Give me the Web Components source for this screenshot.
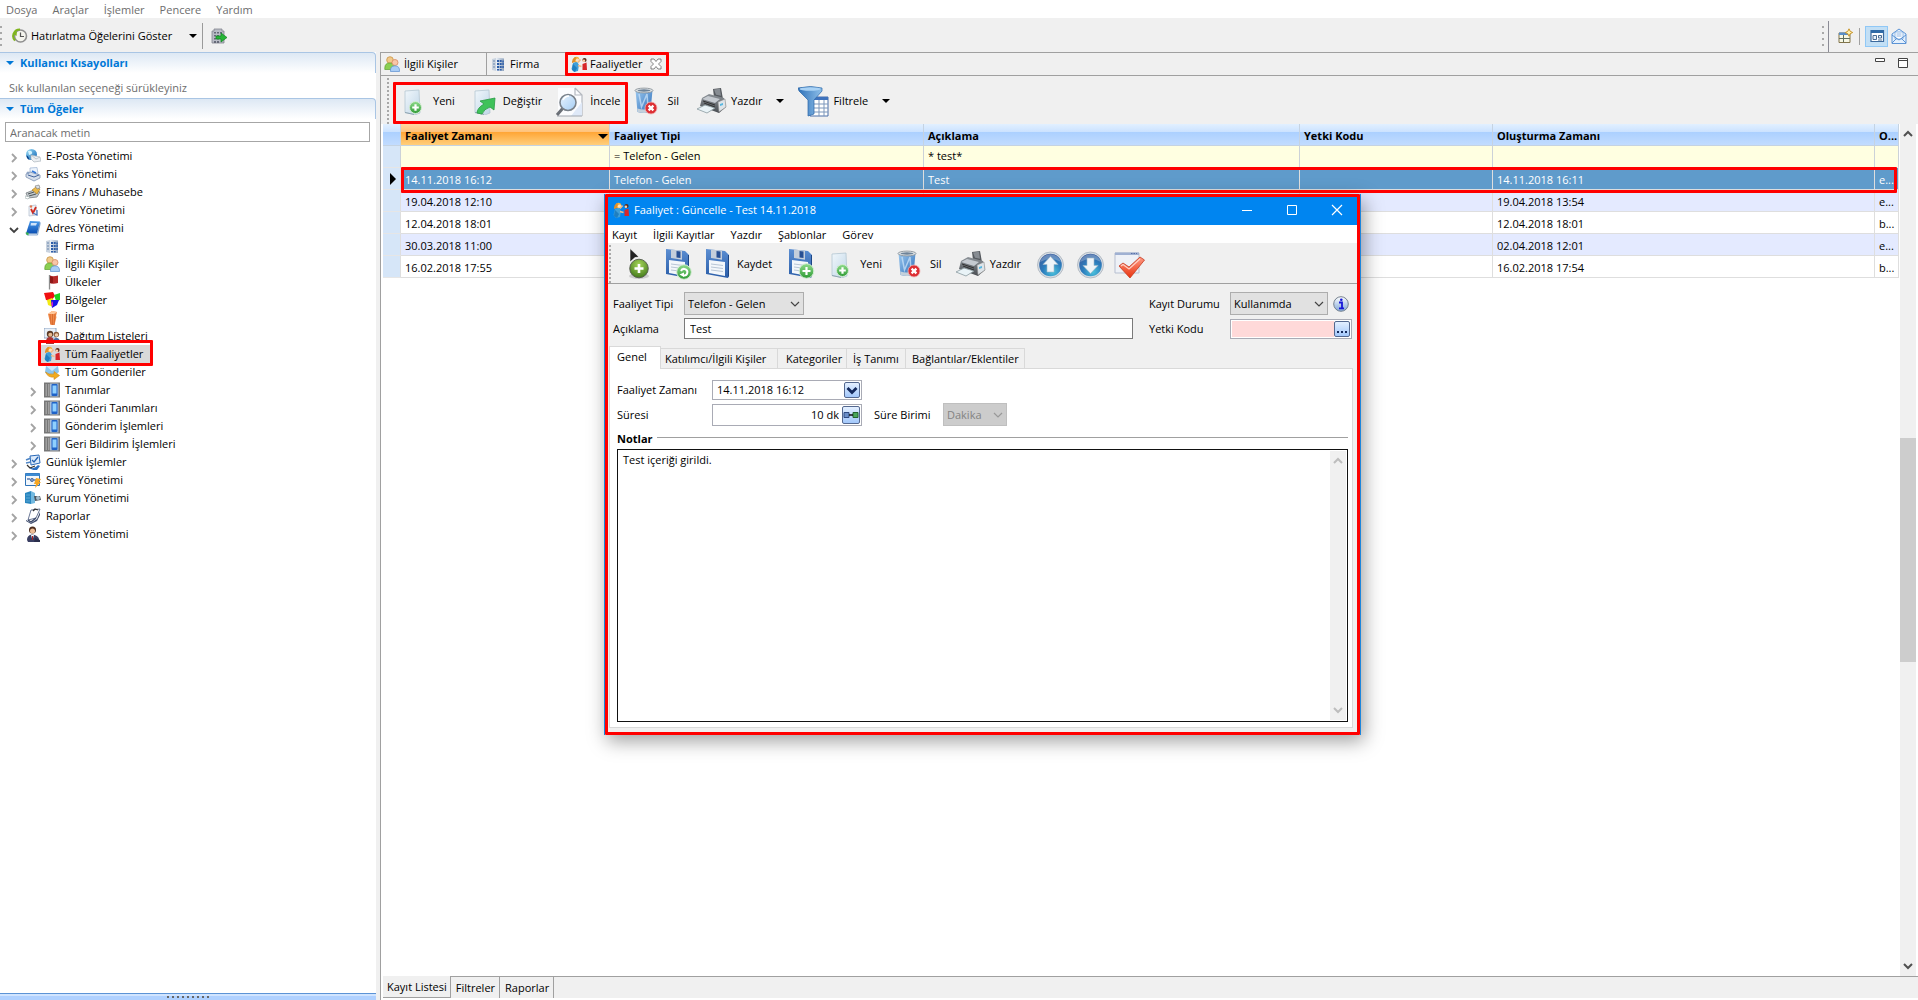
<!DOCTYPE html>
<html lang="tr">
<head>
<meta charset="utf-8">
<title>Faaliyetler</title>
<style>
html,body{margin:0;height:100%;overflow:hidden}
body{font:11px/16px "Open Sans","Noto Sans",sans-serif;color:#000;background:#f0f0f0}
</style>
</head>
<body>
<crm-app></crm-app>
<script>
const base = `*{box-sizing:border-box}button,input,select,textarea{font:inherit;color:inherit;margin:0;padding:0;border:0;background:none;border-radius:0;outline:0}button{display:flex;align-items:center;white-space:nowrap}label{white-space:nowrap}`;
const define = (name, html, setup) => {
  const tpl = document.createElement('template');
  tpl.innerHTML = html;
  customElements.define(name, class extends HTMLElement {
    constructor() {
      super();
      this.attachShadow({mode: 'open'}).append(tpl.content.cloneNode(true));
    }
    connectedCallback() { if (setup && !this.ready) { this.ready = true; setup(this, this.shadowRoot); } }
  });
};

/* ---------- icons ---------- */
const grad = (id, a, b, x2 = 0, y2 = 1) => `<linearGradient id="${id}" x1="0" y1="0" x2="${x2}" y2="${y2}"><stop offset="0" stop-color="${a}"/><stop offset="1" stop-color="${b}"/></linearGradient>`;
const badgePlus = (x, y, r) => `${grad('gp', '#8fdc8c', '#2f9a35')}<circle cx="${x}" cy="${y}" r="${r}" fill="url(#gp)" stroke="#d5ecd4" stroke-width="1"/><path d="M${x - r * .55} ${y}h${r * 1.1}M${x} ${y - r * .55}v${r * 1.1}" stroke="#fff" stroke-width="2.2"/>`;
const sheet = `${grad('sh', '#f1f7fb', '#bfd6e8', 1, 1)}<path d="M7 6l14-1 1 23-4 1.500-11-2z" fill="url(#sh)" stroke="#b4c6d2" stroke-width=".8"/><path d="M7 27.500l9 2" stroke="#8fa5b3"/>`;
const floppy = `${grad('fl', '#5b8ed2', '#2a5da8')}<path d="M4 1l19 2 4 4v21l-1 2L4 26z" fill="url(#fl)"/><path d="M26 7v22l1-1V7z" fill="#1c4686"/><path d="M9 1.500l11 1.200v9L9 10z" fill="#c4cedb"/><path d="M14.500 3l4 .4v6.500l-4-.4z" fill="#274f93"/><path d="M7 12l16 2v14L7 25z" fill="#f3f7fb"/><path d="M9 16l12 1.500M9 19l12 1.500M9 22l12 1.500" stroke="#b8c6d6"/>`;
const roundBlue = `<radialGradient id="rb" cx=".6" cy=".8" r=".8"><stop offset="0" stop-color="#4cc3dc"/><stop offset=".55" stop-color="#2b7cbd"/><stop offset="1" stop-color="#3a5f9f"/></radialGradient><circle cx="16.500" cy="17" r="13" fill="#d7dde3" stroke="#a9b3bc" stroke-width=".8"/><circle cx="16.500" cy="17" r="11.300" fill="url(#rb)"/><path d="M6 14a11 11 0 0 1 21 0q-10-6-21 0z" fill="#fff" opacity=".25"/>`;
const server = `<path d="M0 .5h16v15H0z" fill="#777"/><path d="M1.500 2H3v12H1.500zM4 2h1.500v12H4z" fill="#a0a0a0"/><path d="M6 1.500h8.500v13H6z" fill="#a9bfdb"/><rect x="7.500" y="2" width="6" height="12" rx="1" fill="#1f62c8"/><path d="M8.500 3.500h4v8h-4z" fill="#8fd0ff"/>`;
const building = `${grad('bl', '#eef3f9', '#8fa3bd', 1, 0)}<path d="M2 3l4-1v13l-4-1z" fill="#c9d3df"/><path d="M6 1.500l8 1V15H6z" fill="url(#bl)"/><path d="M3 5h2M3 8h2M3 11h2" stroke="#6b86ad"/><path d="M7 4h2v2H7zM9.700 4h2v2h-2zM12.300 4.500h1.500v2h-1.500zM7 7h2v2H7zM9.700 7h2v2h-2zM12.300 7h1.500v2h-1.500zM7 10h2v2H7zM9.700 10h2v2h-2zM12.300 10h1.500v2h-1.500zM7 13h2v1.500H7zM9.700 13h2v1.500h-2z" fill="#2e5ea8"/>`;
const activity = `<path d="M2 7l4-1.500 2 3.500-1 6-4 1L.5 13z" fill="#3f9fd8"/><path d="M2 8l4 4-2 4-3-2z" fill="#1f7fc0"/><circle cx="5.500" cy="3.500" r="2.800" fill="#f3b03c"/><path d="M1 5.500q1-4.500 4-4.500l-1 5-3 1z" fill="#e0902a"/><circle cx="6.500" cy="4.300" r="1.700" fill="#ffe1bd"/><path d="M7 6.500l2.500-3M7 9.500l3.500 1" stroke="#f0b987" stroke-width="1.700"/><circle cx="13.500" cy="4" r="2.100" fill="#5a2a1a"/><circle cx="12.900" cy="4.700" r="1.300" fill="#ffd2ac"/><path d="M11.500 8l4-1.500.5 7.500h-4.500z" fill="#d8262a"/>`;
const people = `<circle cx="6" cy="4" r="3.300" fill="#f1c98b" stroke="#c99443" stroke-width=".8"/><path d="M.8 12q0-5 5-5t5 5v1.500H.8z" fill="#8bcf52" stroke="#5d9f31" stroke-width=".7"/><circle cx="11" cy="6.500" r="3" fill="#f8c6a8" stroke="#d78a62" stroke-width=".8"/><path d="M6.500 15.500q-.6-5.500 4.500-5.700 5 .2 4.500 5.700z" fill="#a9cdf5" stroke="#5c8fd0" stroke-width=".7"/>`;
const bin = `${grad('bn', '#9cc9f0', '#2b6cb8', 1, 1)}<path d="M3.500 5h17l-2 22q-6 2-13 0z" fill="url(#bn)"/><path d="M7 9l2.500 13L15 9l1 13" fill="none" stroke="#cfe6fb" stroke-width="1.500" opacity=".7"/><path d="M5.300 23.500q6 2 13.400 0l-.3 3.500q-6 2-12.800 0z" fill="#c3d0db"/><ellipse cx="12" cy="5.500" rx="9" ry="2.400" fill="#dfe3e6" stroke="#8d969d" stroke-width=".9"/><ellipse cx="12" cy="5.500" rx="6.500" ry="1.200" fill="#6e8398"/><circle cx="19" cy="23" r="6" fill="#dd2f34" stroke="#f0b4b4" stroke-width=".8"/><path d="M16.600 20.600l4.800 4.800M21.400 20.600l-4.800 4.800" stroke="#fff" stroke-width="2.200"/>`;
const ICONS = {
  none: [0, ''],
  clock: [16, `<circle cx="8.500" cy="8" r="6" fill="#f4f4ee" stroke="#8f8f8f" stroke-width="1.600"/><path d="M8 1.500A6.500 6.500 0 0 0 3 12.500" fill="none" stroke="#7fb51c" stroke-width="2"/><path d="M.5 5.500L5 3.500 4.500 8z" fill="#7fb51c"/><path d="M8.500 4.500V8.500H12" fill="none" stroke="#555" stroke-width="1.200"/>`],
  export: [16, `<path d="M3 1h8v2h2v12H1V3h2z" fill="#b9bcc6" stroke="#80838e" stroke-width=".8"/><path d="M3 4h2v1.500H3zM6 4h2v1.500H6zM9 4h2v1.500H9zM3 7h2v1.500H3zM6 7h2v1.500H6zM3 10h2v1.500H3zM6 10h2v1.500H6zM3 13h2v2H3zM6 13h2v2H6z" fill="#666a78"/><path d="M5 8h5V5l6 4.500-6 4.500v-3H5z" fill="#27b537" stroke="#108420" stroke-width=".7"/>`],
  mail: [16, `${grad('m', '#9fe0f8', '#0c62b4', 1, 1)}<circle cx="6.500" cy="6.500" r="5.500" fill="url(#m)"/><path d="M3 3q3-1 4 1t-3 3z" fill="#d5f4ff"/><path d="M1.500 7q2 1 3 5-3-1-3-5z" fill="#063f86"/><path d="M6 7l9 2 1 4-7 1-3-3z" fill="#eceff2" stroke="#aeb6bd" stroke-width=".7"/><path d="M6 7l5 4 4-2" fill="none" stroke="#aeb6bd" stroke-width=".7"/>`],
  fax: [16, `<path d="M5 2l7-.5 1 6-8 1z" fill="#edf4fc" stroke="#9bb0cf" stroke-width=".7"/><path d="M1 8l4-2 10 3v3l-6 3-8-4z" fill="#d6dfec" stroke="#7b8fae" stroke-width=".8"/><path d="M3 9l6 2 5-2" fill="none" stroke="#41629a"/><path d="M7 5l4 2" stroke="#3478d8" stroke-width="1.600"/><circle cx="3" cy="7" r="1.500" fill="#8da3c4"/>`],
  finance: [16, `<path d="M1 9l8-3 6 2-3 5-9 1z" fill="#c2c8cc" stroke="#777e82" stroke-width=".8"/><path d="M7 6l4-3 4 2-3 5z" fill="#eab94a" stroke="#a7761a" stroke-width=".6"/><path d="M10 2l4-1 1 3-3 1z" fill="#d8dee2" stroke="#777" stroke-width=".6"/><path d="M3 10l6-2M4 12l7-2" stroke="#4d5558"/><path d="M0 12l5 1-2 2-3-1z" fill="#fff" stroke="#9aa" stroke-width=".6"/>`],
  task: [16, `<path d="M4 4l7-1 1 10-8 1z" fill="#eef2f7" stroke="#b9c4d3" stroke-width=".8"/><path d="M6 7l2 4 3-6" fill="none" stroke="#d22b20" stroke-width="1.800"/><path d="M8 11l4 2V8" fill="none" stroke="#4a74ba" stroke-width="1.200"/><circle cx="6" cy="4.500" r="1.200" fill="#e07a50"/>`],
  book: [16, `${grad('bk', '#4b9bea', '#0a4fb4')}<path d="M5 1l10 .5-3 12H1z" fill="url(#bk)"/><path d="M1 13.500h11l3-11v2L12.500 15H2z" fill="#e7edf5" stroke="#2b64ac" stroke-width=".5"/><path d="M6 3h6l-1 2.500H5.500z" fill="#cfe3fa"/><path d="M.5 12.500h3v3l-2-1z" fill="#37b34a"/>`],
  building: [16, building],
  people: [16, people],
  flag: [16, `<path d="M5.500 1v14.500" stroke="#8c8c8c" stroke-width="1.300"/><path d="M6 1.500q3 1.500 8 0v7.500q-5 1.500-8 0z" fill="#b52a2a"/><path d="M6 2q2 1.500 3 1v6q-2 .5-3 0z" fill="#8d1717"/>`],
  regions: [16, `<path d="M0 1l9-1 2 4-4 5-5-1z" fill="#f01010"/><path d="M10 3l6-2v7l-4 1z" fill="#1ed31e"/><path d="M3 8l5-2 4 5-3 4-5-2z" fill="#f2ea14"/><path d="M7 8l8 0-2 5-5 3z" fill="#1414e6"/><path d="M9 9l-2 3 2 3z" fill="#d21ad2"/>`],
  city: [16, `<path d="M4 4l4-3 5 1-1 4 .5 1-2 8H6.500z" fill="#f08a4a"/><path d="M6 4l1 10M8.500 4v11M11 4l-1 11" stroke="#d4652a" stroke-width=".8"/><path d="M4 4l4-3 5 1-3 2z" fill="#ffc79b"/>`],
  list: [16, `<path d="M0 0h12v10H0z" fill="#e9f0f8" stroke="#7a94b8" stroke-width=".8"/><circle cx="6" cy="6" r="3.200" fill="#5b3a26"/><circle cx="6.300" cy="6.800" r="2" fill="#e8b78f"/><path d="M2 14q0-5 4-5t4 5v2H2z" fill="#a33"/><circle cx="12.300" cy="6.500" r="2.800" fill="#8b5a3a"/><circle cx="12.500" cy="7" r="1.800" fill="#f0cba8"/><path d="M9 15q0-5 3.500-5t3.500 5z" fill="#46669e"/>`],
  activity: [16, activity],
  send: [16, `<path d="M2 2h12l1 6-4 3H4L1 8z" fill="#8cc6f0"/><path d="M2 2h12l-6 5z" fill="#cfe8fb"/><path d="M1.500 8q3 3 8.500 2V7.500l5.500 4L10 15.500V13q-6 1-8.500-5z" fill="#f2ac1e" stroke="#d08a18" stroke-width=".6"/>`],
  server: [16, server],
  daily: [16, `<path d="M5 2l9-1 1 8-9 2z" fill="#dceafa" stroke="#2a69b8"/><path d="M1 6l5-2M1 9l5-1" stroke="#4f86c6" stroke-width="1.600"/><path d="M7 6l2 2 4-5" fill="none" stroke="#2260b0" stroke-width="1.300"/><path d="M4 13q5 3 9-2l2 1-3 4q-5 1-8-3z" fill="#2d6fc0"/><path d="M2 11l3 3 5-2" fill="none" stroke="#333" stroke-width="1.200"/>`],
  process: [16, `<path d="M.5 1.500h14v12H.5z" fill="#f2f7fc" stroke="#2f73b7"/><path d="M.5 1.500h14V4H.5z" fill="#3d8bd2"/><path d="M2 7h3M7 6v4M9 8h3" stroke="#5577aa" stroke-width="1.500"/><circle cx="7" cy="8" r="1.600" fill="none" stroke="#5577aa"/><path d="M11 6l5 1-2 3h2l-6 6 1-4H9z" fill="#f6a623"/>`],
  company: [16, `<path d="M0 3l6-2v13l-6-1z" fill="#2a86bf"/><path d="M6 1l4 2v10l-4 1z" fill="#73b9e0"/><path d="M1 5h4M1 8h4M1 11h4" stroke="#5aa7d4"/><path d="M9 6l6 0 1 4-6 1z" fill="#4d565e"/><circle cx="13" cy="8" r="2" fill="#a4bccc"/>`],
  report: [16, `<path d="M6 2l9-1-4 9-8 2z" fill="#fff" stroke="#5b6a8a" stroke-width=".9"/><path d="M1 12l5 3 6-4 3-7v3l-3 6-6 3-5-3z" fill="#3d4a6b"/><path d="M3 12l3 2 5-4" fill="none" stroke="#3d4a6b" stroke-width="1.500"/><path d="M8 3l2-2 3 1" fill="none" stroke="#333" stroke-width="1.300"/>`],
  user: [16, `<circle cx="7.500" cy="4" r="3.500" fill="#4b2c1c"/><circle cx="7.500" cy="5" r="2.500" fill="#eebd95"/><path d="M2 14q0-5 5-5.500 6 .5 7 4.500v3H3z" fill="#3a3f63"/><path d="M6 9l1.500 5L9 9z" fill="#fff"/><path d="M7.500 10v4" stroke="#b02020"/><path d="M10 12l5 2v2h-6z" fill="#2a2e4c"/>`],
  persp: [16, `<path d="M2 5h11v9.500H2z" fill="#f7f7e4" stroke="#82754a"/><path d="M2 4.500h9V7H2z" fill="#5a8fc8"/><path d="M6.500 7v7M2 10.500h11" stroke="#5f6e5f"/><path d="M12 .8l1.200 2.500L15.700 4.500l-2.500 1.200L12 8.200l-1.200-2.500L8.300 4.500l2.500-1.200z" fill="#fff2b0" stroke="#c9962a"/>`],
  windowed: [16, `<path d="M2 2.500h12.500v11H2z" fill="#fff" stroke="#3c6a9d" stroke-width="1.200"/><path d="M2 2h12.500v3H2z" fill="#2f6aa6"/><path d="M4 7.500h3.500v4H4zM9.500 7.500h3v2.500h-3z" fill="#e7f1fb" stroke="#4a6c92"/><path d="M9 12h4" stroke="#4a6c92"/>`],
  open: [16, `<path d="M1 6l7-5 7 5v9.500H1z" fill="#e3f0fd" stroke="#5b93d5"/><path d="M4 4h8v7H4z" fill="#fff" stroke="#7aa8de" stroke-width=".8"/><path d="M5.500 6h5M5.500 8h5" stroke="#8db4e4"/><path d="M1 7l7 5 7-5M1 15l5-5M15 15l-5-5" fill="none" stroke="#5b93d5"/>`],
  info: [16, `${grad('in', '#fff', '#7fa6d8')}<circle cx="8" cy="8" r="7.300" fill="url(#in)" stroke="#76828f"/><path d="M6 6.500h3V12M6 12.300h5" stroke="#1717d8" stroke-width="1.800" fill="none"/><circle cx="8.300" cy="3.800" r="1.300" fill="#1717d8"/>`],
  new: [32, sheet + badgePlus(17.5, 22.5, 6)],
  edit: [32, sheet + `<path d="M9 28q0-5 7-9l-4-3 15-3-1 12-4-3q-6 2-8 7z" fill="#3fc25a" stroke="#2a9a44" stroke-width=".8"/>`],
  inspect: [32, `<path d="M3 3h17l7 7v21H3z" fill="#fbfcfe"/><path d="M20 3l7 7v21M20 3v7h7" fill="none" stroke="#b4b8bf" stroke-width="1.200"/><path d="M16 31h11V17z" fill="#dfe9f8"/><path d="M2 31h25" stroke="#a0a6ae"/>${grad('ln', '#e8f4ff', '#a5cdf4', 1, 1)}<path d="M8 23l-6 7" stroke="#6a6f76" stroke-width="3"/><circle cx="13" cy="17.500" r="8" fill="url(#ln)" stroke="#7a828b" stroke-width="1.600"/><path d="M8 15q2-4 6-4" fill="none" stroke="#fff" stroke-width="1.600"/>`],
  bin: [32, bin],
  print: [32, `${grad('pr', '#8c9298', '#4a4e53')}<path d="M17 4l8-1 2 11-9-2z" fill="#55595e"/><path d="M18 4.500l6-.8 1 7-5-1z" fill="#878c92"/><path d="M6 13l7-4 15 4 2 9-7 6L4 21z" fill="url(#pr)"/><path d="M6 14l6-3 12 3-5 4z" fill="#c5cad0"/><path d="M22 17l7-3 1 8-7 5z" fill="#dfe4e8" stroke="#888" stroke-width=".6"/><path d="M24 19l3-1v2l-3 1z" fill="#58b7e0"/><path d="M1 24l8-4 10 3-8 5z" fill="#e9f3f7" stroke="#8a9aa0" stroke-width=".8"/><path d="M7 16l12 4M8 18l11 4" stroke="#333" stroke-width="1"/>`],
  filter: [32, `<path d="M12 12h18v19H12z" fill="#fff" stroke="#4a6fa8"/><path d="M12 12h18v3H12z" fill="#3f73bd"/><path d="M12 19h18M12 23h18M12 27h18M21 15v16M26 15v16" stroke="#7d97bb"/>${grad('fn', '#2e71b8', '#8fc0ea', 1, 0)}<path d="M0 3q13-3 24 0v3l-8 9v14l-6 2V15L1 6z" fill="url(#fn)" stroke="#2a66a8" stroke-width=".7"/><ellipse cx="12" cy="4" rx="10.500" ry="1.800" fill="#a9d2f5"/>`],
  add: [32, `<radialGradient id="ad" cx=".5" cy=".3" r=".8"><stop offset="0" stop-color="#a7d65a"/><stop offset="1" stop-color="#356d12"/></radialGradient><ellipse cx="17" cy="28" rx="10" ry="3" fill="#000" opacity=".15"/><circle cx="17" cy="20.500" r="9.300" fill="url(#ad)" stroke="#52594c" stroke-width=".9"/><path d="M12.500 20.500h9M17 16v9" stroke="#fff" stroke-width="2.600"/><path d="M8 .5l9 8.500-4 .6L8 14z" fill="#222" stroke="#fff" stroke-width=".6"/>`],
  save: [32, floppy],
  saveref: [32, floppy + `${grad('gr', '#8fdc8c', '#2f9a35')}<circle cx="22" cy="24" r="7.300" fill="url(#gr)" stroke="#d5ecd4"/><path d="M19 23a3.300 3.300 0 1 1 2.500 4.500" fill="none" stroke="#fff" stroke-width="2"/><path d="M17.500 26.500l4.500-2v4.500z" fill="#fff"/>`],
  saveadd: [32, floppy + badgePlus(21.5, 23, 7.3)],
  up: [32, roundBlue + `<path d="M16.500 8.500l7.500 8h-4V24h-7v-7.500H9z" fill="#eef4f8" stroke="#9fb6c8" stroke-width=".6"/>`],
  down: [32, roundBlue + `<path d="M16.500 25.500l7.500-8h-4V10h-7v7.500H9z" fill="#eef4f8" stroke="#9fb6c8" stroke-width=".6"/>`],
  check: [32, `${grad('ck', '#ff9a84', '#e8330f')}<path d="M1 5h24v20H1z" fill="#eef1f7" stroke="#b7bfd0"/><path d="M1 4.500h24V7H1z" fill="#9fb0d2"/><path d="M17 5.500h6" stroke="#5670a8" stroke-dasharray="1.500 1"/><path d="M5 18l4-3 6 4L26 9l4.500 3L16 30z" fill="url(#ck)" stroke="#c43a20" stroke-width=".8"/><path d="M7 18l2-1.500 6 4.500L26 11" fill="none" stroke="#ffd0c5" stroke-width="1.200"/>`],
  right: [10, `<path d="M3 1l4 4-4 4" fill="none" stroke="#a3a3a3" stroke-width="1.800"/>`],
  expanded: [10, `<path d="M1 3l4 4 4-4" fill="none" stroke="#404040" stroke-width="1.800"/>`],
  chev: [10, `<path d="M1 3l4 4 4-4" fill="none" stroke="currentColor" stroke-width="1.200"/>`],
  sup: [10, `<path d="M1 8l4-4 4 4" fill="none" stroke="currentColor" stroke-width="2"/>`],
  sdown: [10, `<path d="M1 2l4 4 4-4" fill="none" stroke="currentColor" stroke-width="2"/>`],
  tri: [8, `<path d="M0 2h8L4 6z" fill="currentColor"/>`],
  sort: [10, `<path d="M0 3h10L5 8z" fill="#000"/>`],
  close: [12, `<path d="M1 1h3l2 2.500L8 1h3v2.500L8.500 6 11 8.500V11H8L6 8.500 4 11H1V8.500L3.500 6 1 3.500z" fill="#fff" stroke="#666" stroke-width=".8"/>`],
  wmin: [12, `<path d="M1.500 1.500h9v3h-9z" fill="#fff" stroke="#444"/>`],
  wmax: [12, `<path d="M1.500 1.500h9v9h-9zM1.500 3.500h9" fill="#fff" stroke="#444"/>`],
  cmin: [12, `<path d="M1 6.500h10" stroke="#fff"/>`],
  cmax: [12, `<path d="M1.500 1.500h9v9h-9z" fill="none" stroke="#fff"/>`],
  cclose: [12, `<path d="M1 1l10 10M11 1L1 11" stroke="#fff" stroke-width="1.200"/>`],
  pick: [16, `<path d="M3.500 6l4.500 4.500L12.500 6" fill="none" stroke="#13295c" stroke-width="2.800"/>`],
  link: [16, `<path d="M1 5.500h5v5H1z" fill="#6b8fc8" stroke="#2f4a80"/><path d="M10 5.500h5v5h-5z" fill="#4aa75a" stroke="#23642f"/><path d="M6 8h4" stroke="#111" stroke-width="1.500"/>`],
  dots: [16, `<path d="M3 10h2v2H3zM7 10h2v2H7zM11 10h2v2h-2z" fill="#13295c"/>`]
};
const makeIcon = name => {
  const icon = document.createElement('ui-icon');
  icon.setAttribute('name', name);
  return icon;
};
define('ui-icon', `<style>:host{display:inline-flex;flex:none}svg{display:block}</style>`, (el, root) => {
  const [size, art] = ICONS[el.getAttribute('name')];
  const holder = document.createElement('template');
  holder.innerHTML = `<svg width="${size}" height="${size}" viewBox="0 0 ${size} ${size}" aria-hidden="true">${art}</svg>`;
  root.append(holder.content);
});

/* red frame that calls out the part it lies over */
define('call-out', `<style>:host{position:absolute;inset:var(--inset,0);border:3px solid #f00;border-radius:1px;pointer-events:none;z-index:2}</style>`);

define('grip-dots', `<style>:host{display:block;flex:none;width:2px;align-self:stretch;background:repeating-linear-gradient(#a8a8a8 0 2px,transparent 2px var(--step,4px))}</style>`);

define('tool-button', `<style>${base}:host{display:block;flex:none}button{gap:3px;padding-right:1px}:host([text]) button{padding-right:6px}:host([menu]) button{padding-right:3px}.arrow{display:none;margin-left:11px}:host([menu]) .arrow{display:block}:host(:not([text])) button{gap:0}</style>
<button><ui-icon name="none"></ui-icon><slot></slot><ui-icon name="tri" class="arrow"></ui-icon></button>`, (el, root) => {
  root.querySelector('ui-icon').replaceWith(makeIcon(el.getAttribute('icon')));
  root.querySelector('button').setAttribute('aria-label', el.textContent.trim() || el.getAttribute('label'));
});

define('menu-bar', `<style>${base}:host{display:flex;flex:none;height:18px;background:#fff;padding-left:var(--start,6px);gap:var(--gap,15px);color:var(--ink,#6d6d6d)}button{padding-top:2px}</style>`, (el, root) => {
  for (const text of el.getAttribute('items').split('|')) {
    const b = document.createElement('button');
    b.textContent = text;
    root.append(b);
  }
});

define('main-toolbar', `<style>${base}
:host{display:flex;flex:none;height:34px;align-items:center;background:#f0f0f0;padding-top:2px}
grip-dots{height:21px;align-self:center;--step:6px}
.remind{margin-left:10px;gap:3px}.remind ui-icon[name=tri]{margin-left:14px}
.sep{width:1px;height:26px;background:#9a9a9a;margin:0 8px 0 5px}
.right{margin-left:auto;display:flex;align-items:center;padding-right:11px}
.edge{width:1px;height:31px;background:#8c8c96;margin:0 8px 0 4px}
.sep2{width:1px;height:17px;background:#a0a0a0;margin:0 5px 0 6px}
.on{width:23px;height:21px;justify-content:center;background:#c2dff5;border:1px solid #90c8f6;margin-right:3px}
</style>
<grip-dots></grip-dots><button class="remind"><ui-icon name="clock"></ui-icon>Hatırlatma Öğelerini Göster<ui-icon name="tri"></ui-icon></button>
<span class="sep"></span><button aria-label="Çıkış"><ui-icon name="export"></ui-icon></button>
<div class="right"><grip-dots></grip-dots><span class="edge"></span><button aria-label="Perspektif aç"><ui-icon name="persp"></ui-icon></button><span class="sep2"></span><button class="on" aria-label="Kayıtlar"><ui-icon name="windowed"></ui-icon></button><button aria-label="Posta"><ui-icon name="open"></ui-icon></button></div>`);

define('section-head', `<style>${base}:host{display:flex;flex:none;height:21px;align-items:center;gap:6px;padding-left:6px;border:1px solid #a9c5e4;border-width:1px 1px 0 0;border-radius:0 4px 0 0;background:linear-gradient(#dde8f4,#fff);color:#0078d7;font-weight:700}h2{font:inherit;margin:0}</style><ui-icon name="tri"></ui-icon><h2><slot></slot></h2>`);

const TREE = [
  [0, 'mail', 'E-Posta Yönetimi', 1], [0, 'fax', 'Faks Yönetimi', 1], [0, 'finance', 'Finans / Muhasebe', 1], [0, 'task', 'Görev Yönetimi', 1], [0, 'book', 'Adres Yönetimi', 2],
  [1, 'building', 'Firma'], [1, 'people', 'İlgili Kişiler'], [1, 'flag', 'Ülkeler'], [1, 'regions', 'Bölgeler'], [1, 'city', 'İller'], [1, 'list', 'Dağıtım Listeleri'], [1, 'activity', 'Tüm Faaliyetler', 0, 1], [1, 'send', 'Tüm Gönderiler'],
  [1, 'server', 'Tanımlar', 1], [1, 'server', 'Gönderi Tanımları', 1], [1, 'server', 'Gönderim İşlemleri', 1], [1, 'server', 'Geri Bildirim İşlemleri', 1],
  [0, 'daily', 'Günlük İşlemler', 1], [0, 'process', 'Süreç Yönetimi', 1], [0, 'company', 'Kurum Yönetimi', 1], [0, 'report', 'Raporlar', 1], [0, 'user', 'Sistem Yönetimi', 1]];
define('nav-tree', `<style>${base}
:host{display:block;padding:5px 0 0 9px}ul{margin:0;padding:0;list-style:none}
li{display:flex;align-items:center;height:18px;gap:6px}li.child{padding-left:19px}
.tw{width:10px;height:10px;padding:0;margin-top:3px}
.item{position:relative;gap:5px;height:18px;white-space:nowrap}
.sel{isolation:isolate}.sel::before{content:"";position:absolute;inset:0 -8px 0 -3px;background:#d9d9d9;z-index:-1}
call-out{--inset:-5px -10px -3px -6px}
</style><ul role="tree"></ul>`, (el, root) => {
  root.querySelector('ul').innerHTML = TREE.map(([lvl, icon, text, tw, sel]) =>
    `<li role="treeitem" class="${lvl ? 'child' : ''}"><button class="tw" tabindex="-1" aria-label="${text} dalı">${tw ? `<ui-icon name="${tw === 2 ? 'expanded' : 'right'}"></ui-icon>` : ''}</button><button class="item ${sel ? 'sel' : ''}"><ui-icon name="${icon}"></ui-icon>${text}${sel ? '<call-out></call-out>' : ''}</button></li>`).join('');
});

define('side-panel', `<style>${base}
:host{display:flex;flex-direction:column;background:#fff;min-height:0}
p{margin:0;padding:7px 9px 2px;height:25px;color:#6d6d6d;white-space:nowrap}
.search{margin:3px 6px 0 5px;height:20px;border:1px solid #a6a6a6;padding:0 4px;background:#fff}
.search::placeholder{color:#6d6d6d;opacity:1}
nav-tree{flex:1;min-height:0}
.foot{height:7px;flex:none;border-top:1px solid #5b93d6;background:linear-gradient(#d0e4ff 0 2px,#b0d1ff 2px);display:flex;justify-content:center}
.foot i{margin-top:2px;width:43px;height:2px;background:repeating-linear-gradient(90deg,#666 0 2px,transparent 2px 5px)}
</style>
<section-head>Kullanıcı Kısayolları</section-head><p>Sık kullanılan seçeneği sürükleyiniz</p>
<section-head>Tüm Öğeler</section-head><input class="search" placeholder="Aranacak metin" aria-label="Aranacak metin">
<nav-tree></nav-tree><div class="foot"><i></i></div>`);

define('editor-tabs', `<style>${base}
:host{display:flex;flex:none;height:24px;border-top:1px solid #a0a0a0;border-bottom:1px solid #a0a0a0;background:#f0f0f0}
button{gap:4px;padding-left:3px;border-right:1px solid #a0a0a0;position:relative}
.a{width:106px}.b{width:78px;border-right:0}.c{width:104px;padding-left:6px;gap:3px;border:0}.c ui-icon[name=close]{margin-left:4px}
call-out{--inset:-1px 0 -1px 0}
div{margin-left:auto;display:flex;gap:11px;padding:4px 9px 0 0}div button{border:0;padding:0;align-items:flex-start}
</style>
<button class="a"><ui-icon name="people"></ui-icon>İlgili Kişiler</button><button class="b"><ui-icon name="building"></ui-icon>Firma</button><button class="c"><ui-icon name="activity"></ui-icon>Faaliyetler<ui-icon name="close"></ui-icon><call-out></call-out></button>
<div><button aria-label="Küçült"><ui-icon name="wmin"></ui-icon></button><button aria-label="Büyüt"><ui-icon name="wmax"></ui-icon></button></div>`);

define('record-toolbar', `<style>${base}
:host{display:flex;flex:none;height:48px;background:#f0f0f0;padding:2px 0 0 6px}
.bar,.marked{display:flex;align-items:center;gap:7px;height:46px}
.marked{position:relative;padding-left:9px;margin-right:6px}
call-out{--inset:4px -2px 0 4px}
.bar tool-button[menu]{margin-left:4px}
</style>
<grip-dots></grip-dots><div class="marked"><tool-button icon="new" text>Yeni</tool-button><tool-button icon="edit" text>Değiştir</tool-button><tool-button icon="inspect" text>İncele</tool-button><call-out></call-out></div>
<div class="bar"><tool-button icon="bin" text>Sil</tool-button><tool-button icon="print" text menu>Yazdır</tool-button><tool-button icon="filter" text menu>Filtrele</tool-button></div>`);

const ROWS = [['14.11.2018 16:12', 'Telefon - Gelen', 'Test', '', '14.11.2018 16:11', 'e...'], ['19.04.2018 12:10', '', '', '', '19.04.2018 13:54', 'e...'], ['12.04.2018 18:01', '', '', '', '12.04.2018 18:01', 'b...'], ['30.03.2018 11:00', '', '', '', '02.04.2018 12:01', 'e...'], ['16.02.2018 17:55', '', '', '', '16.02.2018 17:54', 'b...']];
define('record-grid', `<style>${base}
:host{display:flex;flex:1;min-height:0;background:#fff;padding-left:2px}
.wrap{flex:1;min-width:0;margin-right:1px}
.holder{position:relative}
table{width:100%;table-layout:fixed;border-collapse:separate;border-spacing:0}
th,td{height:22px;padding:2px 0 0 4px;text-align:left;white-space:nowrap;overflow:hidden;border:1px solid #dedede;border-width:0 1px 1px 0;line-height:16px}
th{background:linear-gradient(#e2f0ff,#cbe2ff 38%,#abd0ff 38%,#c2dcff);font-weight:700;border-color:#c5d3e2}
th.sort{background:linear-gradient(#ffd8a4,#ffc27a 38%,#ffa535 38%,#ffcf7c)}
th.sort div{display:flex;justify-content:space-between;align-items:center;padding-right:1px}
tbody tr:nth-child(even) td{background:#e4eaff}
tr.filter td{background:#ffffe1;border-bottom-color:#f0f0f0;padding:0 0 2px 4px;border-right-color:#ccd2d8}
tr td:first-child,tbody tr:nth-child(even) td:first-child,tr.filter td:first-child{background:#d6e6f8;padding:0;border-bottom-color:#e6e6e6}
tbody tr.sel td:not(:first-child){background:#5f9bcb;color:#fff}
call-out{--inset:43px 2px auto 18px;height:26px}
.ptr{display:block;width:0;height:0;border:6px solid transparent;border-left-color:#000;border-right:0;margin-left:7px}
.scroll{width:16px;flex:none;background:#f0f0f0;margin-right:2px;display:flex;flex-direction:column;align-items:center;padding:4px 0;color:#505050}
.track{flex:1;width:100%;display:flex;flex-direction:column}.track::before{content:"";flex:300}.track i{flex:223;background:#cdcdcd}.track::after{content:"";flex:300}
</style>
<div class="wrap"><div class="holder"><table><colgroup><col style="width:18px"><col style="width:209px"><col style="width:314px"><col><col style="width:193px"><col style="width:382px"><col style="width:24px"></colgroup>
<thead><tr><th aria-label="Seçim"></th><th class="sort"><div>Faaliyet Zamanı<ui-icon name="sort"></ui-icon></div></th><th>Faaliyet Tipi</th><th>Açıklama</th><th>Yetki Kodu</th><th>Oluşturma Zamanı</th><th>O...</th></tr>
<tr class="filter"><td></td><td></td><td>= Telefon - Gelen</td><td>* test*</td><td></td><td></td><td></td></tr></thead><tbody></tbody></table><call-out></call-out></div></div>
<div class="scroll"><ui-icon name="sup"></ui-icon><div class="track"><i></i></div><ui-icon name="sdown"></ui-icon></div>`, (el, root) => {
  root.querySelector('tbody').innerHTML = ROWS.map((r, i) => `<tr${i ? '' : ' class="sel"'}><td>${i ? '' : '<span class="ptr"></span>'}</td>${r.map(c => `<td>${c}</td>`).join('')}</tr>`).join('');
});

define('page-tabs', `<style>${base}
:host{display:flex;flex:none;height:24px;background:#fff;padding:0 0 2px 2px}
button{height:22px;padding:0 4px 0 5px;background:#f0f0f0;border:1px solid #a0a0a0;border-width:1px 1px 0 0}
.on{border-width:0 1px 1px 0;padding:0 3px 0 4px}
span{flex:1;background:#f0f0f0;border-top:1px solid #a0a0a0}
</style><button class="on">Kayıt Listesi</button><button>Filtreler</button><button>Raporlar</button><span></span>`);

define('drop-field', `<style>${base}
:host{display:inline-grid;height:23px}
select,ui-icon{grid-area:1/1}select{appearance:none;width:100%;height:23px;border:1px solid #adadad;background:#e1e1e1;padding:0 3px}
ui-icon{justify-self:end;align-self:center;margin-right:4px;color:#444;pointer-events:none}
select:disabled{background:#ccc;border-color:#bfbfbf;color:#838383;opacity:1}select:disabled+ui-icon{color:#999}
</style><select><option></option></select><ui-icon name="chev"></ui-icon>`, (el, root) => {
  const s = root.querySelector('select');
  s.options[0].textContent = el.getAttribute('value');
  s.disabled = el.hasAttribute('disabled');
  s.setAttribute('aria-label', el.getAttribute('label'));
});

define('pick-field', `<style>${base}
:host{display:flex;height:var(--h,20px);border:1px solid #a9abb5;background:#fff;padding:1px;align-items:stretch}
input{flex:1;min-width:0;padding:0 3px;background:var(--fill,#fff);text-align:var(--align,left)}
button{width:var(--b,16px);justify-content:center;border:1px solid #54688f;border-radius:2px;background:linear-gradient(#e3efff,#a3c8fb)}
</style><input><button><ui-icon name="none"></ui-icon></button>`, (el, root) => {
  const label = el.getAttribute('label');
  const i = root.querySelector('input');
  i.value = el.getAttribute('value') || '';
  i.setAttribute('aria-label', label);
  root.querySelector('button').setAttribute('aria-label', label + ' seç');
  root.querySelector('ui-icon').replaceWith(makeIcon(el.getAttribute('icon')));
});

define('activity-form', `<style>${base}
:host{display:flex;flex-direction:column;flex:1;min-height:0;background:#f0f0f0;padding:8px 4px 4px 1px}
.top{display:grid;grid-template-columns:71px 1fr 81px 122px;row-gap:3px;padding:0 1px 0 4px;align-items:center;margin-bottom:7px}
.top .desc{height:21px;border:1px solid #7a7a7a;background:#fff;padding:0 5px;width:100%}
.mid{padding-right:16px;display:flex}
.state{display:flex;align-items:center;gap:5px}.state drop-field{width:98px}
.tabs{display:flex;align-items:flex-end;height:22px;flex:none}
.tabs button{width:69px;height:20px;background:#f0f0f0;border:1px solid #d9d9d9;border-width:1px 1px 0 0;padding:0 0 0 8px}
.tabs .on{height:23px;background:#fff;width:52px;border-width:1px 1px 0 1px;padding:0 0 3px 7px;margin-bottom:-1px;position:relative}
.tabs .w{width:117px;padding-left:4px}.tabs .t{width:59px;padding-left:6px}.tabs .x{width:119px;padding-left:6px}
.panel{flex:1;min-height:0;display:flex;flex-direction:column;background:#fff;border:1px solid #d9d9d9;padding:11px 4px 5px 7px}
.grid{display:grid;grid-template-columns:95px 150px 81px 64px;row-gap:3px;align-items:center}
.grid .s{padding-left:12px}
fieldset{border:0;margin:4px 0 0;padding:0;min-width:0;flex:1;display:flex;flex-direction:column;min-height:0}
.legend{display:flex;align-items:center;gap:4px;font-weight:700;height:18px;flex:none}.legend::after{content:"";flex:1;height:1px;background:#a0a0a0;margin-bottom:3px}
.notes{flex:1;display:flex;border:1px solid #111;margin-top:1px;padding:1px 1px 1px 0;min-height:0}
textarea{flex:1;resize:none;padding:1px 5px;line-height:16px;overflow:hidden}
.sb{width:16px;background:#f0f0f0;display:flex;flex-direction:column;justify-content:space-between;align-items:center;padding:4px 0;color:#bdbdbd}
</style>
<div class="top"><label>Faaliyet Tipi</label><div><drop-field style="width:120px" value="Telefon - Gelen" label="Faaliyet Tipi"></drop-field></div><label>Kayıt Durumu</label><div class="state"><drop-field value="Kullanımda" label="Kayıt Durumu"></drop-field><ui-icon name="info"></ui-icon></div>
<label for="desc">Açıklama</label><div class="mid"><input class="desc" id="desc" value="Test"></div><label>Yetki Kodu</label><pick-field icon="dots" label="Yetki Kodu" style="--fill:#ffd9d9"></pick-field></div>
<div class="tabs"><button class="on">Genel</button><button class="w">Katılımcı/İlgili Kişiler</button><button>Kategoriler</button><button class="t">İş Tanımı</button><button class="x">Bağlantılar/Eklentiler</button></div>
<div class="panel"><div class="grid"><label>Faaliyet Zamanı</label><pick-field icon="pick" value="14.11.2018 16:12" label="Faaliyet Zamanı"></pick-field><span></span><span></span>
<label>Süresi</label><pick-field icon="link" value="10 dk" label="Süresi" style="--h:22px;--b:18px;--align:right"></pick-field><label class="s">Süre Birimi</label><drop-field value="Dakika" label="Süre Birimi" disabled></drop-field></div>
<fieldset><label class="legend" for="notes">Notlar</label><div class="notes"><textarea id="notes">Test içeriği girildi.</textarea><div class="sb"><ui-icon name="sup"></ui-icon><ui-icon name="sdown"></ui-icon></div></div></fieldset></div>`);

define('activity-dialog', `<style>${base}
:host{position:absolute;left:604px;top:194px;width:757px;height:541px;display:flex;flex-direction:column;border:1px solid #1c86dc;border-width:0 1px;padding:3px;box-shadow:3px 6px 18px rgba(0,0,0,.38)}
header{display:flex;align-items:center;height:28px;flex:none;background:#0085f0;color:#fff;padding:0 14px 3px 5px;gap:5px}
h1{font:inherit;margin:0}.win{margin-left:auto;display:flex;gap:33px}
.bar{display:flex;align-items:center;height:41px;flex:none;background:#f0f0f0;border-bottom:1px solid #a0a0a0;gap:7px;padding:2px 0 0 1px}
grip-dots{margin-right:4px}
menu-bar{--start:4px;--ink:#000;--gap:16px}
</style>
<header><ui-icon name="activity"></ui-icon><h1>Faaliyet : Güncelle - Test 14.11.2018</h1><div class="win"><button aria-label="Simge durumuna küçült"><ui-icon name="cmin"></ui-icon></button><button aria-label="Ekranı kapla"><ui-icon name="cmax"></ui-icon></button><button aria-label="Kapat"><ui-icon name="cclose"></ui-icon></button></div></header>
<menu-bar items="Kayıt|İlgili Kayıtlar|Yazdır|Şablonlar|Görev"></menu-bar>
<div class="bar"><grip-dots></grip-dots><tool-button icon="add" label="Ekle"></tool-button><tool-button icon="saveref" label="Kaydet ve yenile"></tool-button><tool-button icon="save" text>Kaydet</tool-button><tool-button icon="saveadd" label="Kaydet ve yeni"></tool-button><tool-button icon="new" text>Yeni</tool-button><tool-button icon="bin" text>Sil</tool-button><tool-button icon="print" text>Yazdır</tool-button><tool-button icon="up" label="Önceki"></tool-button><tool-button icon="down" label="Sonraki"></tool-button><tool-button icon="check" label="Onayla"></tool-button></div>
<activity-form></activity-form><call-out></call-out>`);

define('crm-app', `<style>${base}
:host{display:flex;flex-direction:column;height:100vh;position:relative;background:#f0f0f0}
main{display:grid;grid-template-columns:376px 1fr;column-gap:4px;flex:1;min-height:0}
.editor{display:flex;flex-direction:column;border-left:1px solid #a0a0a0;min-width:0;min-height:0}
</style>
<menu-bar items="Dosya|Araçlar|İşlemler|Pencere|Yardım"></menu-bar><main-toolbar></main-toolbar>
<main><side-panel></side-panel><section class="editor"><editor-tabs></editor-tabs><record-toolbar></record-toolbar><record-grid></record-grid><page-tabs></page-tabs></section></main>
<activity-dialog></activity-dialog>`);
</script>
</body>
</html>
